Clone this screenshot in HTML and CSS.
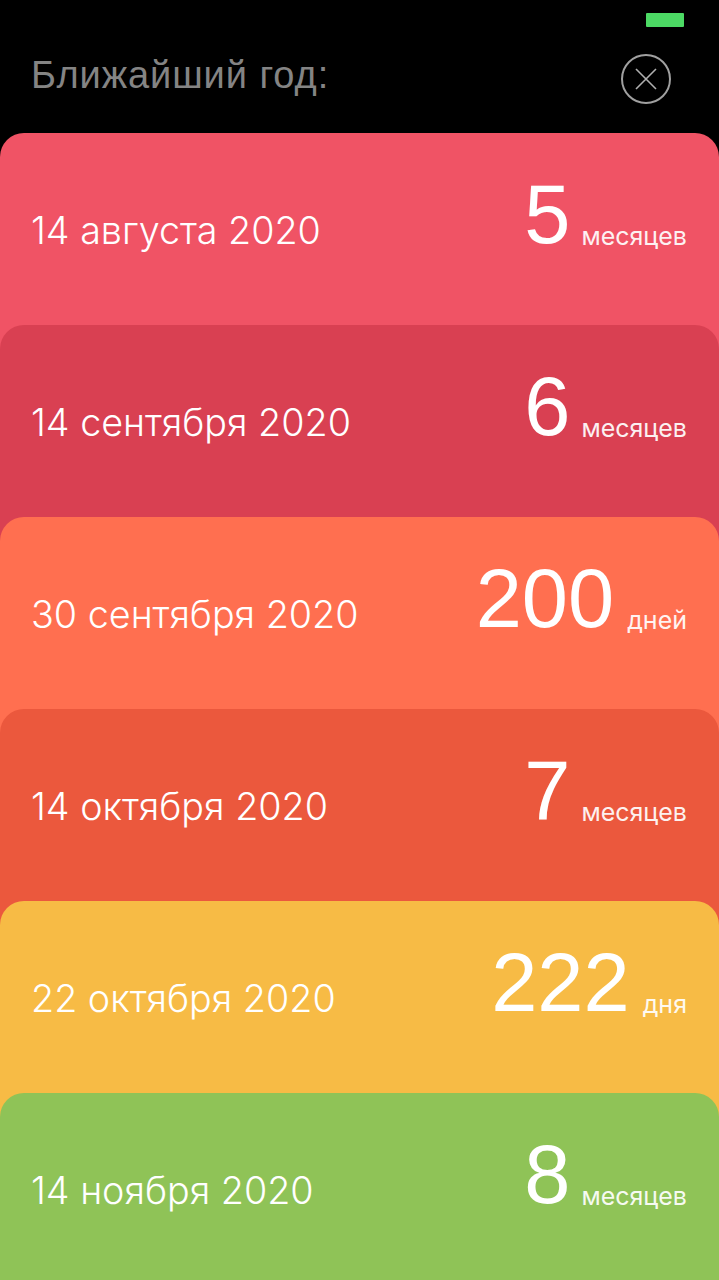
FILE: index.html
```html
<!DOCTYPE html>
<html lang="ru">
<head>
<meta charset="utf-8">
<title>Ближайший год</title>
<link rel="stylesheet" href="styles.css">
</head>
<body>
<div class="screen">
  <div class="status"><span class="battery"></span></div>
  <header class="header">
    <h1 class="title">Ближайший год:</h1>
    <svg class="close" width="52" height="52" viewBox="0 0 52 52" fill="none">
      <circle cx="26" cy="26" r="24" stroke="#a0a0a0" stroke-width="2"/>
      <path d="M16 16 L36 36 M36 16 L16 36" stroke="#b0b0b0" stroke-width="1.6"/>
    </svg>
  </header>
  <main class="cards">
    <section class="card c1"><span class="date">14 августа 2020</span><span class="left"><span class="num">5</span><span class="unit months">месяцев</span></span></section>
    <section class="card c2"><span class="date">14 сентября 2020</span><span class="left"><span class="num">6</span><span class="unit months">месяцев</span></span></section>
    <section class="card c3"><span class="date">30 сентября 2020</span><span class="left"><span class="num">200</span><span class="unit">дней</span></span></section>
    <section class="card c4"><span class="date">14 октября 2020</span><span class="left"><span class="num">7</span><span class="unit months">месяцев</span></span></section>
    <section class="card c5"><span class="date">22 октября 2020</span><span class="left"><span class="num">222</span><span class="unit">дня</span></span></section>
    <section class="card c6"><span class="date">14 ноября 2020</span><span class="left"><span class="num">8</span><span class="unit months">месяцев</span></span></section>
  </main>
</div>
</body>
</html>
```
FILE: styles.css
```css
* { box-sizing: border-box; }
html, body { margin: 0; padding: 0; background: #000; }
.screen { width: 719px; height: 1280px; overflow: hidden; background: #000; font-family: Inter, "Noto Sans", sans-serif; color: #fff; }
.status { height: 40px; display: flex; justify-content: flex-end; padding: 13px 35px 0 0; }
.battery { width: 38px; height: 14px; background: #4cd964; border-radius: 1px; }
.header { height: 93px; display: flex; justify-content: space-between; align-items: flex-start; padding: 13px 47px 0 31px; }
.title { margin: 0; font-family: "Liberation Sans", Arial, sans-serif; font-weight: 400; font-size: 38px; letter-spacing: .92px; line-height: 44px; color: #848484; }
.close { display: block; }
.cards { display: flex; flex-direction: column; }
.card { height: 216px; margin-bottom: -24px; border-radius: 24px 24px 0 0; padding: 0 32px 0 31px; display: flex; justify-content: space-between; align-items: flex-start; }
.date { margin-top: 73px; font-weight: 270; font-size: 37.7px; line-height: 48px; color: #fff; }
.left { display: block; white-space: nowrap; margin-top: 34px; line-height: 96px; }
.num { font-family: "Liberation Sans", Arial, sans-serif; font-size: 83px; line-height: 96px; font-weight: 400; }
.unit { margin-left: 13px; font-size: 25px; line-height: 30px; vertical-align: -2px; font-weight: 400; color: #fff; opacity: .92; }
.months { margin-left: 11px; }
.c1 { background: #f05365; }
.c2 { background: #d94052; }
.c3 { background: #ff6f50; }
.c4 { background: #eb583d; }
.c5 { background: #f7bb45; }
.c6 { background: #8fc357; }
```
